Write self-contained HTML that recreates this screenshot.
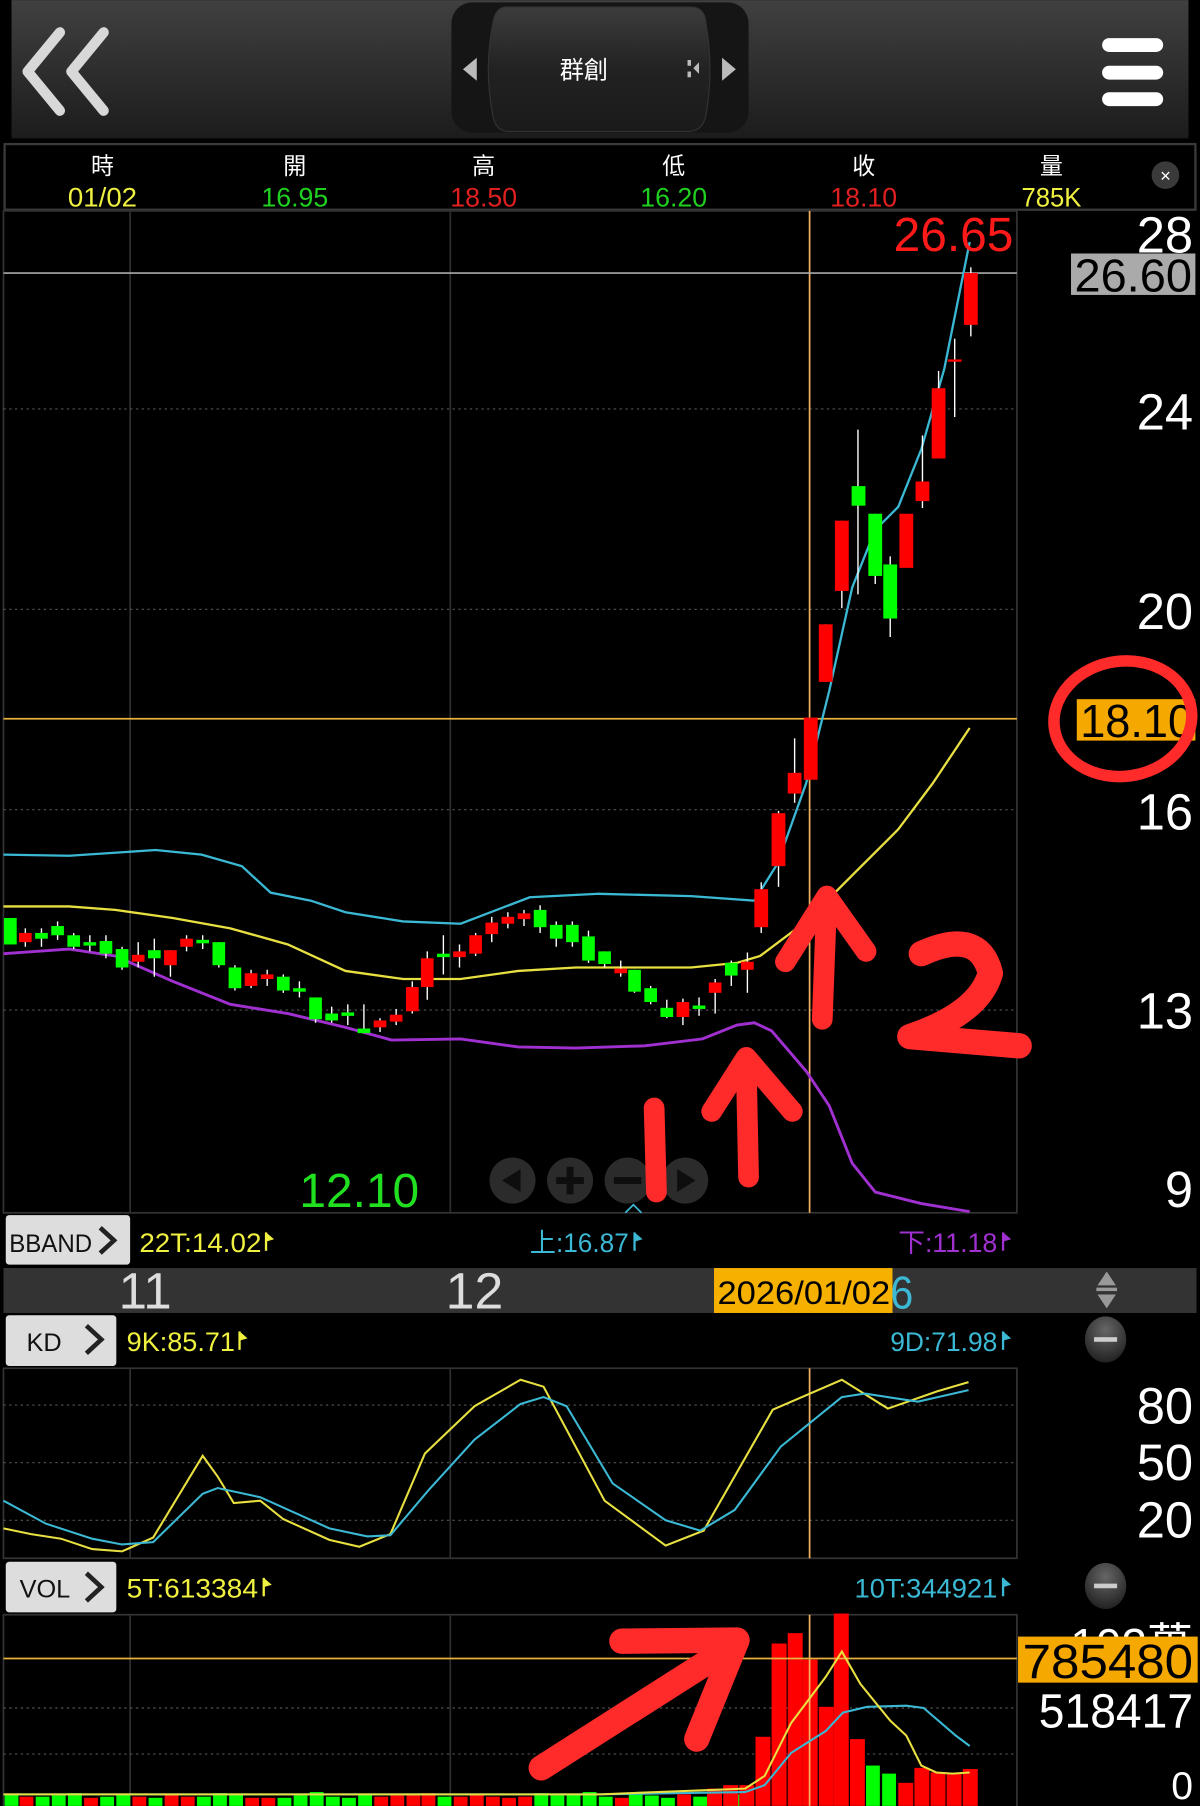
<!DOCTYPE html>
<html><head><meta charset="utf-8"><style>
html,body{margin:0;padding:0;background:#000;width:1200px;height:1806px;overflow:hidden}
svg{display:block}
text{font-family:"Liberation Sans","Noto Sans CJK TC",sans-serif}
</style></head><body>
<svg width="1200" height="1806" viewBox="0 0 1042 1568" xmlns="http://www.w3.org/2000/svg">
<defs>
<linearGradient id="hd" x1="0" y1="0" x2="0" y2="1"><stop offset="0" stop-color="#404040"/><stop offset="1" stop-color="#1c1c1c"/></linearGradient>
<linearGradient id="pill" x1="0" y1="0" x2="0" y2="1"><stop offset="0" stop-color="#3c3c3c"/><stop offset="0.5" stop-color="#222"/><stop offset="1" stop-color="#1a1a1a"/></linearGradient>
<radialGradient id="btn" cx="0.5" cy="0.3" r="0.7"><stop offset="0" stop-color="#666"/><stop offset="1" stop-color="#222"/></radialGradient>
</defs>
<rect width="1042" height="1568" fill="#000"/>
<!-- header -->
<rect x="10" y="0" width="1022" height="120" fill="url(#hd)"/>
<polyline points="52,28 24,62 52,96" fill="none" stroke="#d8d8d8" stroke-width="9" stroke-linejoin="round" stroke-linecap="round"/>
<polyline points="90,28 62,62 90,96" fill="none" stroke="#d8d8d8" stroke-width="9" stroke-linejoin="round" stroke-linecap="round"/>
<rect x="957" y="33" width="53" height="12" rx="6" fill="#fff"/>
<rect x="957" y="57" width="53" height="12" rx="6" fill="#fff"/>
<rect x="957" y="80" width="53" height="12" rx="6" fill="#fff"/>
<rect x="392" y="2" width="258" height="113" rx="18" fill="#151515"/>
<path d="M440,6 L600,6 Q612,6 613,20 Q620,60 613,100 Q610,114 598,114 L442,114 Q430,114 428,100 Q420,60 428,20 Q430,6 440,6 Z" fill="url(#pill)" stroke="#333"/>
<polygon points="414,50 402,60 414,70" fill="#bbb"/>
<polygon points="627,50 639,60 627,70" fill="#bbb"/>
<rect x="597" y="52" width="3" height="5" fill="#bbb"/><rect x="597" y="62" width="3" height="5" fill="#bbb"/><polygon points="607,54 602,59 607,64" fill="#bbb"/>
<text x="507" y="68" fill="#fff" font-size="21" text-anchor="middle">群創</text>
<!-- info row -->
<rect x="4" y="125" width="1034" height="57" fill="#000" stroke="#3a3a3a" stroke-width="2"/>
<g font-size="20" fill="#fff" text-anchor="middle">
<text x="89" y="151">時</text><text x="256" y="151">開</text><text x="420" y="151">高</text><text x="585" y="151">低</text><text x="750" y="151">收</text><text x="913" y="151">量</text>
</g>
<g font-size="23" text-anchor="middle" lengthAdjust="spacingAndGlyphs">
<text x="89" y="179" fill="#f0f040" textLength="60" lengthAdjust="spacingAndGlyphs">01/02</text><text x="256" y="179" fill="#20d020" textLength="58" lengthAdjust="spacingAndGlyphs">16.95</text><text x="420" y="179" fill="#e02020" textLength="58" lengthAdjust="spacingAndGlyphs">18.50</text><text x="585" y="179" fill="#20d020" textLength="58" lengthAdjust="spacingAndGlyphs">16.20</text><text x="750" y="179" fill="#e02020" textLength="58" lengthAdjust="spacingAndGlyphs">18.10</text><text x="913" y="179" fill="#f0f040" textLength="52" lengthAdjust="spacingAndGlyphs">785K</text>
</g>
<circle cx="1012" cy="152" r="12" fill="#3a3a3a"/><text x="1012" y="158" fill="#fff" font-size="16" text-anchor="middle">×</text>
<!-- main chart -->
<rect x="3" y="183" width="880" height="870" fill="#000" stroke="#333" stroke-width="1.5"/>
<g stroke="#2e2e2e" stroke-width="1.5"><line x1="113" y1="183" x2="113" y2="1053"/><line x1="391" y1="183" x2="391" y2="1053"/></g>
<g stroke="#555" stroke-width="1" stroke-dasharray="2,3"><line x1="3" y1="355" x2="883" y2="355"/><line x1="3" y1="529" x2="883" y2="529"/><line x1="3" y1="703" x2="883" y2="703"/><line x1="3" y1="877" x2="883" y2="877"/></g>
<line x1="703" y1="183" x2="703" y2="1053" stroke="#f0b060" stroke-width="1.5"/>
<line x1="3" y1="237" x2="883" y2="237" stroke="#aaa" stroke-width="1.5"/>
<line x1="3" y1="624" x2="883" y2="624" stroke="#e8b040" stroke-width="1.5"/>
<!-- bbands -->
<polyline fill="none" stroke="#3bb8d4" stroke-width="2" points="3,742 60,743 135,738 175,742 210,752 235,775 270,782 300,792 350,800 400,802 460,779 520,776 600,778 655,782 675,750 700,680 720,600 740,510 760,460 780,440 800,390 820,320 842,210"/>
<polyline fill="none" stroke="#e8e040" stroke-width="2" points="3,787 60,787 100,790 150,797 200,806 250,820 300,843 350,850 400,850 450,843 500,840 550,840 600,840 640,836 660,830 700,800 740,760 780,720 810,680 842,632"/>
<polyline fill="none" stroke="#a030d0" stroke-width="2.5" points="3,828 60,824 100,830 150,852 200,872 250,880 300,892 340,903 400,902 450,909 500,910 560,908 610,902 640,890 655,888 670,895 700,930 720,960 740,1010 760,1035 800,1045 842,1052"/>
<!-- candles -->
<g stroke="#fff" stroke-width="1.2">
<line x1="9" y1="797" x2="9" y2="820"/><line x1="22" y1="806" x2="22" y2="822"/><line x1="36" y1="806" x2="36" y2="822"/><line x1="50" y1="800" x2="50" y2="816"/><line x1="64" y1="810" x2="64" y2="824"/><line x1="78" y1="812" x2="78" y2="826"/><line x1="92" y1="812" x2="92" y2="832"/><line x1="106" y1="822" x2="106" y2="842"/><line x1="120" y1="818" x2="120" y2="840"/><line x1="134" y1="815" x2="134" y2="848"/><line x1="148" y1="825" x2="148" y2="848"/><line x1="162" y1="812" x2="162" y2="826"/><line x1="176" y1="812" x2="176" y2="824"/><line x1="190" y1="818" x2="190" y2="840"/><line x1="204" y1="838" x2="204" y2="860"/><line x1="218" y1="842" x2="218" y2="858"/><line x1="232" y1="842" x2="232" y2="856"/><line x1="246" y1="846" x2="246" y2="862"/><line x1="260" y1="852" x2="260" y2="866"/><line x1="274" y1="866" x2="274" y2="888"/><line x1="288" y1="874" x2="288" y2="888"/><line x1="302" y1="872" x2="302" y2="890"/><line x1="316" y1="872" x2="316" y2="897"/><line x1="330" y1="884" x2="330" y2="896"/><line x1="344" y1="876" x2="344" y2="890"/><line x1="358" y1="852" x2="358" y2="880"/><line x1="371" y1="826" x2="371" y2="868"/><line x1="385" y1="812" x2="385" y2="846"/><line x1="399" y1="820" x2="399" y2="840"/><line x1="413" y1="810" x2="413" y2="830"/><line x1="427" y1="796" x2="427" y2="818"/><line x1="441" y1="792" x2="441" y2="806"/><line x1="455" y1="790" x2="455" y2="804"/><line x1="469" y1="786" x2="469" y2="810"/><line x1="483" y1="800" x2="483" y2="822"/><line x1="497" y1="800" x2="497" y2="822"/><line x1="511" y1="808" x2="511" y2="836"/><line x1="525" y1="826" x2="525" y2="840"/><line x1="539" y1="834" x2="539" y2="848"/><line x1="551" y1="842" x2="551" y2="862"/><line x1="565" y1="856" x2="565" y2="872"/><line x1="579" y1="868" x2="579" y2="884"/><line x1="593" y1="867" x2="593" y2="890"/><line x1="607" y1="866" x2="607" y2="882"/><line x1="621" y1="850" x2="621" y2="880"/><line x1="635" y1="834" x2="635" y2="856"/><line x1="649" y1="827" x2="649" y2="862"/><line x1="661" y1="766" x2="661" y2="810"/><line x1="676" y1="704" x2="676" y2="770"/><line x1="690" y1="641" x2="690" y2="697"/><line x1="717" y1="542" x2="717" y2="592"/><line x1="731" y1="452" x2="731" y2="528"/><line x1="745" y1="373" x2="745" y2="516"/><line x1="760" y1="446" x2="760" y2="507"/><line x1="773" y1="483" x2="773" y2="553"/><line x1="801" y1="378" x2="801" y2="441"/><line x1="815" y1="322" x2="815" y2="398"/><line x1="829" y1="294" x2="829" y2="362"/><line x1="843" y1="232" x2="843" y2="292"/>
</g>
<g fill="#00ff00">
<rect x="3.5" y="797" width="11" height="23"/><rect x="30.5" y="810" width="11" height="5"/><rect x="44.5" y="804" width="11" height="8"/><rect x="58.5" y="812" width="11" height="10"/><rect x="72.5" y="818" width="11" height="3"/><rect x="86.5" y="817" width="11" height="11"/><rect x="100.5" y="824" width="11" height="16"/><rect x="128.5" y="825" width="11" height="7"/><rect x="170.5" y="816" width="11" height="3"/><rect x="184.5" y="818" width="11" height="20"/><rect x="198.5" y="840" width="11" height="18"/><rect x="240.5" y="848" width="11" height="12"/><rect x="254.5" y="858" width="11" height="3"/><rect x="268.5" y="866" width="11" height="19"/><rect x="282.5" y="880" width="11" height="6"/><rect x="296.5" y="879" width="11" height="3"/><rect x="310.5" y="893" width="11" height="4"/><rect x="379.5" y="828" width="11" height="3"/><rect x="463.5" y="790" width="11" height="15"/><rect x="477.5" y="803" width="11" height="12"/><rect x="491.5" y="803" width="11" height="15"/><rect x="505.5" y="813" width="11" height="21"/><rect x="519.5" y="826" width="11" height="11"/><rect x="545.5" y="842" width="11" height="19"/><rect x="559.5" y="858" width="11" height="12"/><rect x="573.5" y="875" width="11" height="8"/><rect x="601.5" y="873" width="11" height="3"/><rect x="629.5" y="836" width="11" height="11"/><rect x="739.5" y="422" width="12" height="17"/><rect x="754" y="446" width="12" height="54"/><rect x="767" y="490" width="12" height="47"/>
</g>
<g fill="#ff0000">
<rect x="16.5" y="810" width="11" height="8"/><rect x="114.5" y="829" width="11" height="6"/><rect x="142.5" y="825" width="11" height="13"/><rect x="156.5" y="815" width="11" height="7"/><rect x="212.5" y="845" width="11" height="11"/><rect x="226.5" y="846" width="11" height="4"/><rect x="324.5" y="886" width="11" height="6"/><rect x="338.5" y="881" width="11" height="6"/><rect x="352.5" y="857" width="11" height="21"/><rect x="365.5" y="832" width="11" height="25"/><rect x="393.5" y="826" width="11" height="5"/><rect x="407.5" y="812" width="11" height="16"/><rect x="421.5" y="801" width="11" height="10"/><rect x="435.5" y="796" width="11" height="6"/><rect x="449.5" y="793" width="11" height="5"/><rect x="533.5" y="841" width="11" height="4"/><rect x="587.5" y="870" width="11" height="13"/><rect x="615.5" y="853" width="11" height="9"/><rect x="643.5" y="835" width="11" height="7"/><rect x="655" y="772" width="12" height="33"/><rect x="670" y="706" width="12" height="46"/><rect x="684" y="671" width="12" height="18"/><rect x="698" y="623" width="12" height="54"/><rect x="711" y="542" width="12" height="50"/><rect x="725" y="452" width="12" height="61"/><rect x="781" y="446" width="12" height="47"/><rect x="795" y="418" width="12" height="17"/><rect x="809" y="337" width="12" height="61"/><rect x="823" y="312" width="12" height="2"/><rect x="837" y="237" width="12" height="45"/>
</g>
<!-- zoom buttons -->
<g opacity="0.85">
<circle cx="445" cy="1025" r="20" fill="#333"/><circle cx="495" cy="1025" r="20" fill="#333"/><circle cx="545" cy="1025" r="20" fill="#333"/><circle cx="595" cy="1025" r="20" fill="#333"/>
<polygon points="452,1015 436,1025 452,1035" fill="#111"/><polygon points="588,1015 604,1025 588,1035" fill="#111"/>
<rect x="483" y="1022" width="24" height="6" fill="#111"/><rect x="492" y="1013" width="6" height="24" fill="#111"/><rect x="533" y="1022" width="24" height="6" fill="#111"/>
</g>
<polyline points="543,1053 550,1046 557,1053" fill="none" stroke="#3bb8d4" stroke-width="1.5"/>
<text x="776" y="218" fill="#ff1a1a" font-size="42" textLength="104" lengthAdjust="spacingAndGlyphs">26.65</text>
<text x="260" y="1048" fill="#20e020" font-size="42" textLength="104" lengthAdjust="spacingAndGlyphs">12.10</text>
<!-- right axis -->
<g fill="#fff" font-size="44" text-anchor="end">
<text x="1036" y="219">28</text><text x="1036" y="373">24</text><text x="1036" y="546">20</text><text x="1036" y="720">16</text><text x="1036" y="893">13</text><text x="1036" y="1048">9</text>
</g>
<rect x="930" y="220" width="108" height="36" fill="#aaa"/><text x="1035" y="253" fill="#000" font-size="40" text-anchor="end" textLength="102" lengthAdjust="spacingAndGlyphs">26.60</text>
<rect x="935" y="607" width="103" height="36" fill="#f5a800"/><text x="1036" y="640" fill="#000" font-size="40" text-anchor="end" textLength="98" lengthAdjust="spacingAndGlyphs">18.10</text>
<!-- annotations -->
<g fill="none" stroke="#ff2a2a" stroke-linecap="round" stroke-linejoin="round">
<ellipse cx="975" cy="624" rx="60" ry="50" stroke-width="10" transform="rotate(-8 975 624)"/>
<line x1="568" y1="962" x2="570" y2="1035" stroke-width="18"/>
<line x1="650" y1="1022" x2="648" y2="925" stroke-width="18"/>
<polyline points="618,965 648,918 688,965" stroke-width="18"/>
<line x1="714" y1="885" x2="718" y2="778" stroke-width="18"/>
<polyline points="682,835 718,778 752,826" stroke-width="18"/>
<path d="M800,828 Q850,805 860,845 Q850,880 790,900 L885,908" stroke-width="22"/>
</g>
<!-- BBAND row -->
<rect x="5" y="1055" width="108" height="43" rx="3" fill="#ddd"/>
<text x="8" y="1087" fill="#111" font-size="22" textLength="72" lengthAdjust="spacingAndGlyphs">BBAND</text>
<polyline points="87,1066 99,1077 87,1088" fill="none" stroke="#222" stroke-width="4"/>
<text x="121" y="1087" fill="#f0f040" font-size="23" textLength="106" lengthAdjust="spacingAndGlyphs">22T:14.02</text><polygon points="231,1070 238,1076 231,1078" fill="#f0f040"/><rect x="230" y="1070" width="2" height="16" fill="#f0f040"/>
<text x="460" y="1087" fill="#3bb8d4" font-size="23" textLength="86" lengthAdjust="spacingAndGlyphs">上:16.87</text><rect x="550" y="1070" width="2" height="16" fill="#3bb8d4"/><polygon points="551,1070 558,1076 551,1078" fill="#3bb8d4"/>
<text x="780" y="1087" fill="#a030d0" font-size="23" textLength="86" lengthAdjust="spacingAndGlyphs">下:11.18</text><rect x="870" y="1070" width="2" height="16" fill="#a030d0"/><polygon points="871,1070 878,1076 871,1078" fill="#a030d0"/>
<!-- date bar -->
<rect x="3" y="1101" width="1036" height="39" fill="#333"/>
<text x="103" y="1136" fill="#ddd" font-size="44" textLength="46" lengthAdjust="spacingAndGlyphs">11</text>
<text x="387" y="1136" fill="#ddd" font-size="44" textLength="50" lengthAdjust="spacingAndGlyphs">12</text>
<rect x="620" y="1101" width="155" height="39" fill="#f5b000"/>
<text x="623" y="1132" fill="#000" font-size="28" textLength="150" lengthAdjust="spacingAndGlyphs">2026/01/02</text>
<text x="773" y="1136" fill="#3bb8d4" font-size="40" textLength="20" lengthAdjust="spacingAndGlyphs">6</text>
<polygon points="961,1104 953,1116 969,1116" fill="#999"/><rect x="952" y="1118" width="18" height="3" fill="#999"/><polygon points="953,1124 969,1124 961,1136" fill="#999"/>
<!-- KD row -->
<rect x="5" y="1142" width="96" height="44" rx="3" fill="#ddd"/>
<text x="23" y="1173" fill="#111" font-size="22">KD</text>
<polyline points="75,1151 88,1163 75,1175" fill="none" stroke="#222" stroke-width="4"/>
<text x="110" y="1173" fill="#f0f040" font-size="23" textLength="94" lengthAdjust="spacingAndGlyphs">9K:85.71</text><rect x="207" y="1156" width="2" height="16" fill="#f0f040"/><polygon points="208,1156 215,1162 208,1164" fill="#f0f040"/>
<text x="866" y="1173" fill="#3bb8d4" font-size="23" text-anchor="end" textLength="93" lengthAdjust="spacingAndGlyphs">9D:71.98</text><rect x="870" y="1156" width="2" height="16" fill="#3bb8d4"/><polygon points="871,1156 878,1162 871,1164" fill="#3bb8d4"/>
<ellipse cx="960" cy="1163" rx="18" ry="20" fill="url(#btn)"/><rect x="950" y="1161" width="20" height="4" fill="#ccc"/>
<!-- KD chart -->
<rect x="3" y="1188" width="880" height="165" fill="#000" stroke="#333" stroke-width="1.5"/>
<g stroke="#2e2e2e" stroke-width="1.5"><line x1="113" y1="1188" x2="113" y2="1353"/><line x1="391" y1="1188" x2="391" y2="1353"/></g>
<g stroke="#555" stroke-dasharray="2,3"><line x1="3" y1="1220" x2="883" y2="1220"/><line x1="3" y1="1270" x2="883" y2="1270"/><line x1="3" y1="1320" x2="883" y2="1320"/></g>
<line x1="703" y1="1188" x2="703" y2="1353" stroke="#f0b060" stroke-width="1.5"/>
<polyline fill="none" stroke="#e8e040" stroke-width="1.8" points="3,1327 27,1332 53,1336 80,1345 106,1347 133,1335 176,1264 189,1282 203,1305 226,1303 246,1319 286,1337 312,1343 339,1332 369,1262 412,1221 452,1198 472,1204 525,1303 578,1342 611,1329 671,1224 731,1198 771,1223 814,1208 841,1200"/>
<polyline fill="none" stroke="#3bb8d4" stroke-width="1.8" points="3,1303 40,1323 80,1336 106,1341 133,1339 176,1297 189,1292 226,1300 286,1327 319,1334 339,1333 372,1294 412,1250 452,1219 472,1213 492,1221 532,1288 578,1320 608,1329 638,1311 678,1256 731,1213 751,1210 797,1217 841,1207"/>
<g fill="#fff" font-size="44" text-anchor="end"><text x="1036" y="1236">80</text><text x="1036" y="1285">50</text><text x="1036" y="1335">20</text></g>
<!-- VOL row -->
<rect x="5" y="1356" width="96" height="44" rx="3" fill="#ddd"/>
<text x="17" y="1387" fill="#111" font-size="22">VOL</text>
<polyline points="75,1366 88,1378 75,1390" fill="none" stroke="#222" stroke-width="4"/>
<text x="110" y="1387" fill="#f0f040" font-size="23" textLength="114" lengthAdjust="spacingAndGlyphs">5T:613384</text><rect x="228" y="1370" width="2" height="16" fill="#f0f040"/><polygon points="229,1370 236,1376 229,1378" fill="#f0f040"/>
<text x="866" y="1387" fill="#3bb8d4" font-size="23" text-anchor="end" textLength="124" lengthAdjust="spacingAndGlyphs">10T:344921</text><rect x="870" y="1370" width="2" height="16" fill="#3bb8d4"/><polygon points="871,1370 878,1376 871,1378" fill="#3bb8d4"/>
<ellipse cx="960" cy="1377" rx="18" ry="20" fill="url(#btn)"/><rect x="950" y="1375" width="20" height="4" fill="#ccc"/>
<!-- VOL chart -->
<rect x="3" y="1402" width="880" height="170" fill="#000" stroke="#333" stroke-width="1.5"/>
<g stroke="#2e2e2e" stroke-width="1.5"><line x1="113" y1="1402" x2="113" y2="1568"/><line x1="391" y1="1402" x2="391" y2="1568"/></g>
<g stroke="#555" stroke-dasharray="2,3"><line x1="3" y1="1483" x2="883" y2="1483"/><line x1="3" y1="1523" x2="883" y2="1523"/></g>
<g fill="#00ff00">
<rect x="4" y="1558" width="12" height="10"/><rect x="31" y="1560" width="12" height="8"/><rect x="45" y="1559" width="12" height="9"/><rect x="59" y="1557" width="12" height="11"/><rect x="87" y="1560" width="12" height="8"/><rect x="101" y="1558" width="12" height="10"/><rect x="129" y="1561" width="12" height="7"/><rect x="171" y="1560" width="12" height="8"/><rect x="185" y="1557" width="12" height="11"/><rect x="199" y="1558" width="12" height="10"/><rect x="241" y="1561" width="12" height="7"/><rect x="255" y="1559" width="12" height="9"/><rect x="269" y="1556" width="12" height="12"/><rect x="283" y="1560" width="12" height="8"/><rect x="297" y="1561" width="12" height="7"/><rect x="311" y="1558" width="12" height="10"/><rect x="380" y="1560" width="12" height="8"/><rect x="464" y="1557" width="12" height="11"/><rect x="478" y="1559" width="12" height="9"/><rect x="492" y="1558" width="12" height="10"/><rect x="506" y="1556" width="12" height="12"/><rect x="520" y="1560" width="12" height="8"/><rect x="546" y="1558" width="12" height="10"/><rect x="560" y="1559" width="12" height="9"/><rect x="574" y="1561" width="12" height="7"/><rect x="602" y="1560" width="12" height="8"/><rect x="630" y="1558" width="12" height="10"/><rect x="752" y="1533" width="12" height="35"/><rect x="766" y="1540" width="12" height="28"/>
</g>
<g fill="#ff0000">
<rect x="17" y="1560" width="12" height="8"/><rect x="73" y="1561" width="12" height="7"/><rect x="115" y="1560" width="12" height="8"/><rect x="143" y="1558" width="12" height="10"/><rect x="157" y="1560" width="12" height="8"/><rect x="213" y="1561" width="12" height="7"/><rect x="227" y="1561" width="12" height="7"/><rect x="325" y="1560" width="12" height="8"/><rect x="339" y="1559" width="12" height="9"/><rect x="353" y="1558" width="12" height="10"/><rect x="366" y="1557" width="12" height="11"/><rect x="394" y="1560" width="12" height="8"/><rect x="408" y="1558" width="12" height="10"/><rect x="422" y="1560" width="12" height="8"/><rect x="436" y="1561" width="12" height="7"/><rect x="450" y="1560" width="12" height="8"/><rect x="534" y="1561" width="12" height="7"/><rect x="588" y="1558" width="12" height="10"/><rect x="614" y="1553" width="13" height="15"/><rect x="628" y="1550" width="13" height="18"/><rect x="642" y="1550" width="13" height="18"/>
<rect x="656" y="1508" width="13" height="60"/><rect x="670" y="1427" width="13" height="141"/><rect x="684" y="1418" width="13" height="150"/><rect x="697" y="1441" width="13" height="127"/><rect x="711" y="1482" width="13" height="86"/><rect x="724" y="1401" width="13" height="167"/><rect x="738" y="1510" width="13" height="58"/><rect x="780" y="1548" width="13" height="20"/><rect x="794" y="1535" width="13" height="33"/><rect x="808" y="1539" width="13" height="29"/><rect x="822" y="1540" width="13" height="28"/><rect x="836" y="1536" width="13" height="32"/>
</g>
<line x1="703" y1="1402" x2="703" y2="1568" stroke="#f0b060" stroke-width="1.5"/>
<line x1="3" y1="1440" x2="883" y2="1440" stroke="#e8b040" stroke-width="1.5"/>
<polyline fill="none" stroke="#3bb8d4" stroke-width="1.8" points="3,1558 521,1558 647,1556 664,1550 687,1522 717,1503 732,1487 753,1482 787,1481 802,1483 830,1507 842,1516"/>
<polyline fill="none" stroke="#e8e040" stroke-width="1.8" points="3,1558 521,1558 647,1553 664,1542 687,1496 717,1456 731,1434 747,1462 773,1494 787,1507 800,1533 813,1539 827,1540 842,1539"/>
<g fill="none" stroke="#ff2a2a" stroke-linecap="round" stroke-linejoin="round">
<line x1="470" y1="1535" x2="638" y2="1428" stroke-width="22"/>
<polyline points="540,1425 640,1424 605,1510" stroke-width="22"/>
</g>
<rect x="884" y="1402" width="158" height="166" fill="#000"/>
<text x="1036" y="1442" fill="#fff" font-size="40" text-anchor="end">102萬</text>
<rect x="884" y="1421" width="156" height="40" fill="#f5a800"/>
<text x="1036" y="1457" fill="#000" font-size="42" text-anchor="end" textLength="148" lengthAdjust="spacingAndGlyphs">785480</text>
<text x="1036" y="1500" fill="#fff" font-size="42" text-anchor="end" textLength="134" lengthAdjust="spacingAndGlyphs">518417</text>
<text x="1036" y="1562" fill="#fff" font-size="34" text-anchor="end">0</text>
</svg>
</body></html>
